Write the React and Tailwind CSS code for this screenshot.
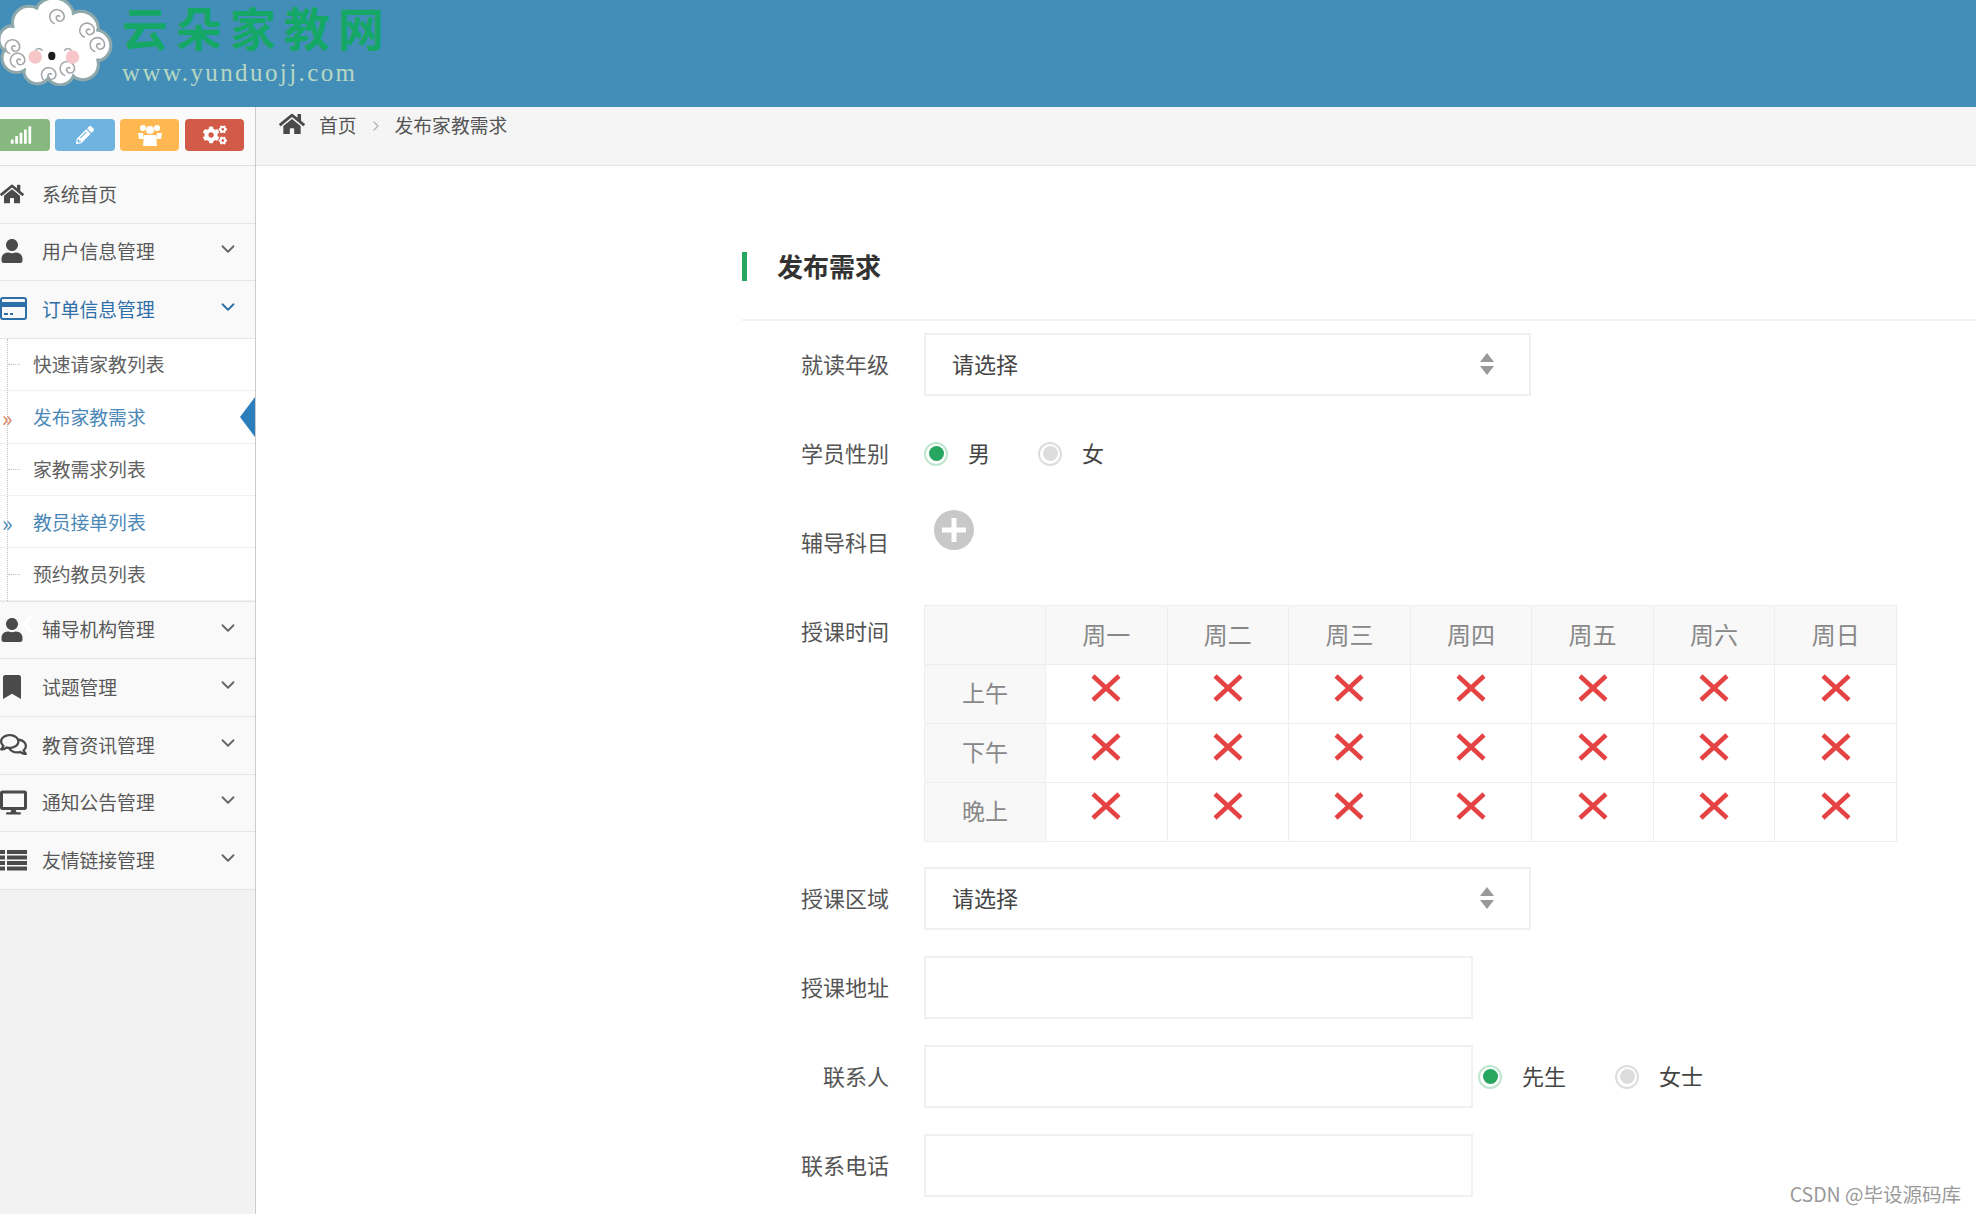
import React from 'react'
import { ChevronDown, ChevronLeft, ChevronRight } from 'lucide-react'
import {
  FaBookmark,
  FaCogs,
  FaDesktop,
  FaHome,
  FaPencilAlt,
  FaRegComments,
  FaSignal,
  FaUser
} from 'react-icons/fa'

const CardIcon = () => (
  <svg width="27" height="23" viewBox="0 0 27 23" fill="none">
    <rect x="1" y="1" width="25" height="21" rx="2" stroke="#2f6fa8" strokeWidth="2" />
    <rect x="1" y="5" width="25" height="5" fill="#2f6fa8" />
    <path d="M4 17h4M10 17h3" stroke="#2f6fa8" strokeWidth="2" />
  </svg>
)

const ListIcon = () => (
  <svg width="27" height="22" viewBox="0 0 27 22" fill="currentColor">
    <path d="M0 1h5v4H0zM7 1h20v4H7zM0 6.500h5v4H0zM7 6.500h20v4H7zM0 12h5v4H0zM7 12h20v4H7zM0 17.500h5v4H0zM7 17.500h20v4H7z" />
  </svg>
)

const GroupIcon = () => (
  <svg width="24" height="22" viewBox="0 0 24 22" fill="#ffffff">
    <circle cx="5" cy="4" r="3" />
    <circle cx="19" cy="4" r="3" />
    <circle cx="12" cy="6" r="4" />
    <path d="M0 9h5l1 6H1zM24 9h-5l-1 6h5z" />
    <path d="M6 11h12l1 11H5z" />
  </svg>
)

const Swirl = ({ x, y }) => (
  <path transform={`translate(${x} ${y})`} d="M-2 7a7 7 0 1 1 9-7c0 4-5 6-7 3s1-5 3-3" />
)

const CloudLogo = () => (
  <svg width="116" height="86" viewBox="0 0 112 83" fill="none" className="shrink-0">
    <g fill="#ffffff" stroke="#8fa8ac" strokeWidth="3">
      <circle cx="52" cy="18" r="20" />
      <circle cx="78" cy="28" r="17" />
      <circle cx="92" cy="44" r="15" />
      <circle cx="80" cy="62" r="15" />
      <circle cx="58" cy="68" r="14" />
      <circle cx="36" cy="68" r="13" />
      <circle cx="16" cy="56" r="14" />
      <circle cx="12" cy="38" r="13" />
      <circle cx="28" cy="22" r="16" />
    </g>
    <ellipse cx="50" cy="42" rx="42" ry="30" fill="#ffffff" />
    <g fill="#ffffff">
      <circle cx="52" cy="18" r="18" />
      <circle cx="78" cy="28" r="15" />
      <circle cx="91" cy="44" r="13" />
      <circle cx="80" cy="62" r="13" />
      <circle cx="58" cy="68" r="12" />
      <circle cx="36" cy="68" r="11" />
      <circle cx="16" cy="56" r="12" />
      <circle cx="12" cy="38" r="11" />
      <circle cx="28" cy="22" r="14" />
    </g>
    <g stroke="#a2a6a8" strokeWidth="1.5">
      <Swirl x={55} y={16} />
      <Swirl x={84} y={29} />
      <Swirl x={94} y={43} />
      <Swirl x={12} y={45} />
      <Swirl x={17} y={58} />
      <Swirl x={65} y={66} />
      <Swirl x={47} y={72} />
      <path d="M34 49c2-3 5-3 7 0M62 49c2-3 5-3 7 0" />
    </g>
    <circle cx="34" cy="55" r="6.500" fill="#f6c6c8" />
    <circle cx="70" cy="55" r="6.500" fill="#f6c6c8" />
    <ellipse cx="50" cy="54" rx="3.500" ry="4" fill="#1c1c1c" />
  </svg>
)

const menuTop = [
  { label: '系统首页', icon: <FaHome size={24} />, arrow: false },
  { label: '用户信息管理', icon: <FaUser size={24} />, arrow: true },
  { label: '订单信息管理', icon: <CardIcon />, arrow: true, active: true }
]

const subMenu = [
  { label: '快速请家教列表' },
  { label: '发布家教需求', current: true, mark: 'text-[#d9805f]' },
  { label: '家教需求列表' },
  { label: '教员接单列表', hover: true, mark: 'text-[#4b88b7]' },
  { label: '预约教员列表' }
]

const menuBottom = [
  { label: '辅导机构管理', icon: <FaUser size={24} />, arrow: true },
  { label: '试题管理', icon: <FaBookmark size={24} />, arrow: true },
  { label: '教育资讯管理', icon: <FaRegComments size={27} />, arrow: true },
  { label: '通知公告管理', icon: <FaDesktop size={27} />, arrow: true },
  { label: '友情链接管理', icon: <ListIcon />, arrow: true }
]

const MenuRow = ({ item }) => (
  <div className={`flex h-[57.6px] items-center border-b border-[#e5e5e5] bg-[#f9f9f9] pb-[1px] text-[18.8px] ${item.active ? 'text-[#2f6fa8]' : 'text-[#585858]'}`}>
    <span className={`flex w-[42px] shrink-0 items-center ${item.active ? 'text-[#2f6fa8]' : 'text-[#4a4a4a]'}`}>{item.icon}</span>
    <span className="flex-1">{item.label}</span>
    {item.arrow && (
      <ChevronDown size={22} strokeWidth={2} className={`mr-[16px] mb-[4px] ${item.active ? 'text-[#2f6fa8]' : 'text-[#666666]'}`} />
    )}
  </div>
)

const Sidebar = () => (
  <aside className="relative w-[256px] shrink-0 border-r border-[#cccccc] bg-[#f2f2f2]">
    <div className="flex h-[59px] items-start gap-[5px] border-b border-[#e0e0e0] bg-[#fafafa] pt-[12px] text-white">
      <span className="-ml-[9px] flex h-[32px] w-[59px] items-center justify-center rounded-[4px] bg-[#87b87f]"><FaSignal size={22} /></span>
      <span className="flex h-[32px] w-[60px] items-center justify-center rounded-[4px] bg-[#6fb3e0]"><FaPencilAlt size={18} /></span>
      <span className="flex h-[32px] w-[59px] items-center justify-center rounded-[4px] bg-[#ffb752]"><GroupIcon /></span>
      <span className="ml-[1px] flex h-[32px] w-[59px] items-center justify-center rounded-[4px] bg-[#d15b47]"><FaCogs size={24} /></span>
    </div>
    {menuTop.map((item) => (
      <MenuRow key={item.label} item={item} />
    ))}
    <div className="relative border-b border-[#e5e5e5] bg-white">
      <span className="absolute top-0 bottom-0 left-[7px] border-l border-dotted border-[#b9c4cc]"></span>
      {subMenu.map((item) => (
        <div
          key={item.label}
          className={`relative flex h-[52.4px] items-center border-b border-dotted border-[#e4e4e4] pl-[33px] text-[18.8px] ${item.current || item.hover ? 'text-[#4b88b7]' : 'text-[#616161]'}`}
        >
          {item.mark ? (
            <span className={`absolute left-[2px] text-[22px] leading-none ${item.mark}`}>»</span>
          ) : (
            <span className="absolute left-[8px] w-[12px] border-t border-dotted border-[#b9c4cc]"></span>
          )}
          {item.label}
          {item.current && (
            <svg width="15" height="40" viewBox="0 0 15 40" className="absolute right-0">
              <polygon points="15,0 15,40 0,20" fill="#2b7dbc" />
            </svg>
          )}
        </div>
      ))}
    </div>
    {menuBottom.map((item) => (
      <MenuRow key={item.label} item={item} />
    ))}
    <ChevronLeft size={28} strokeWidth={3} className="absolute top-[503px] left-[13px] text-white" />
  </aside>
)

const Breadcrumb = () => (
  <div className="flex h-[59px] items-start border-b border-[#e5e5e5] bg-[#f5f5f5] pt-[4px] pl-[23px] text-[18.8px] leading-[28px] text-[#555555]">
    <FaHome size={26} className="text-[#4a4a4a]" />
    <span className="ml-[14px]">首页</span>
    <ChevronRight size={16} strokeWidth={2} className="mx-[11px] mt-[7px] text-[#b5b5b5]" />
    <span>发布家教需求</span>
  </div>
)

const Row = ({ label, children, top = false }) => (
  <div className={`mb-[26px] flex gap-[35px] ${top ? 'items-start' : 'items-center'}`}>
    <label className="flex h-[63px] w-[147px] shrink-0 items-center justify-end pb-[3px] text-[22px] text-[#555555]">{label}</label>
    {children}
  </div>
)

const Radio = ({ label, checked }) => (
  <span className="flex items-center">
    <span className={`flex h-[24px] w-[24px] items-center justify-center rounded-full border-2 bg-white ${checked ? 'border-[#bfe6cf]' : 'border-[#dddddd]'}`}>
      <span className={`h-[15px] w-[15px] rounded-full ${checked ? 'bg-[#27a660]' : 'bg-[#dddddd]'}`}></span>
    </span>
    <span className="ml-[20px] pb-[2px] text-[22px] text-[#444444]">{label}</span>
  </span>
)

const SelectBox = () => (
  <div className="flex h-[63px] w-[607px] items-center justify-between border-2 border-[#f0f0f0] pr-[34px] pb-[1px] pl-[26px] text-[22px] text-[#444444]">
    <span className="pb-[2px]">请选择</span>
    <svg width="16" height="22" viewBox="0 0 16 22">
      <polygon points="8,0 15,9 1,9" fill="#999999" />
      <polygon points="1,13 15,13 8,22" fill="#999999" />
    </svg>
  </div>
)

const TextBox = () => <div className="h-[63px] w-[549px] border-2 border-[#f0f0f0]"></div>

const CrossIcon = () => (
  <svg width="30" height="28" viewBox="0 0 30 28" className="mx-auto -mt-[12px] block">
    <path d="M2 2l26 24M28 2L2 26" stroke="#e54343" strokeWidth="4.500" />
  </svg>
)

const days = ['周一', '周二', '周三', '周四', '周五', '周六', '周日']
const periods = ['上午', '下午', '晚上']

const ScheduleTable = () => (
  <table className="mt-[5px] -mb-[1px] w-[973px] table-fixed border-collapse border border-[#eeeeee] text-center font-normal text-[#888888]">
    <thead>
      <tr className="h-[59px] bg-[#f8f8f8] text-[24px]">
        <th className="w-[121px] border border-[#eeeeee] font-normal"></th>
        {days.map((day) => (
          <th key={day} className="border border-[#eeeeee] pb-[2px] font-normal">{day}</th>
        ))}
      </tr>
    </thead>
    <tbody>
      {periods.map((period) => (
        <tr key={period} className="h-[59px]">
          <td className="border border-[#eeeeee] bg-[#f8f8f8] pb-[3px] text-[23px]">{period}</td>
          {days.map((day) => (
            <td key={day} className="border border-[#eeeeee]"><CrossIcon /></td>
          ))}
        </tr>
      ))}
    </tbody>
  </table>
)

const DemandForm = () => (
  <div className="pl-[486px]">
    <div className="flex h-[155px] items-end gap-[30px] border-b-2 border-[#f2f2f2] pb-[38px]">
      <span className="h-[29px] w-[5px] bg-[#27a660]"></span>
      <h2 className="-mb-[1px] text-[26px] leading-[32px] font-bold text-[#333333]">发布需求</h2>
    </div>
    <div className="pt-[12px]">
      <Row label="就读年级"><SelectBox /></Row>
      <Row label="学员性别">
        <div className="flex items-center gap-[48px]">
          <Radio label="男" checked />
          <Radio label="女" />
        </div>
      </Row>
      <Row label="辅导科目" top>
        <svg width="40" height="40" viewBox="0 0 40 40" className="mt-[-1px] ml-[10px]">
          <circle cx="20" cy="20" r="20" fill="#c8c8c8" />
          <path d="M20 8v24M8 20h24" stroke="#ffffff" strokeWidth="5" />
        </svg>
      </Row>
      <Row label="授课时间" top><ScheduleTable /></Row>
      <Row label="授课区域"><SelectBox /></Row>
      <Row label="授课地址"><TextBox /></Row>
      <Row label="联系人">
        <div className="flex items-center">
          <TextBox />
          <div className="ml-[5px] flex items-center gap-[49px]">
            <Radio label="先生" checked />
            <Radio label="女士" />
          </div>
        </div>
      </Row>
      <Row label="联系电话"><TextBox /></Row>
    </div>
  </div>
)

const App = () => {
  return (
    <div className="relative flex h-[1214px] w-[1976px] flex-col overflow-hidden bg-white font-['Noto_Sans_CJK_SC',sans-serif]">
      <header className="flex h-[107px] shrink-0 items-start gap-[6px] bg-[#438eb9]">
        <CloudLogo />
        <div className="flex flex-col">
          <span className="-mt-[3px] text-[46px] leading-[58px] font-bold tracking-[8px] text-[#14a765]">云朵家教网</span>
          <span className="mt-[4px] font-['Liberation_Serif',serif] text-[25px] leading-[28px] tracking-[2.4px] text-[#b7d8c2]">www.yunduojj.com</span>
        </div>
      </header>
      <div className="flex flex-1">
        <Sidebar />
        <main className="flex-1">
          <Breadcrumb />
          <DemandForm />
        </main>
      </div>
      <span className="absolute right-[15px] bottom-[6px] text-[19.5px] text-[#999999]">CSDN @毕设源码库</span>
    </div>
  )
}

export default App
